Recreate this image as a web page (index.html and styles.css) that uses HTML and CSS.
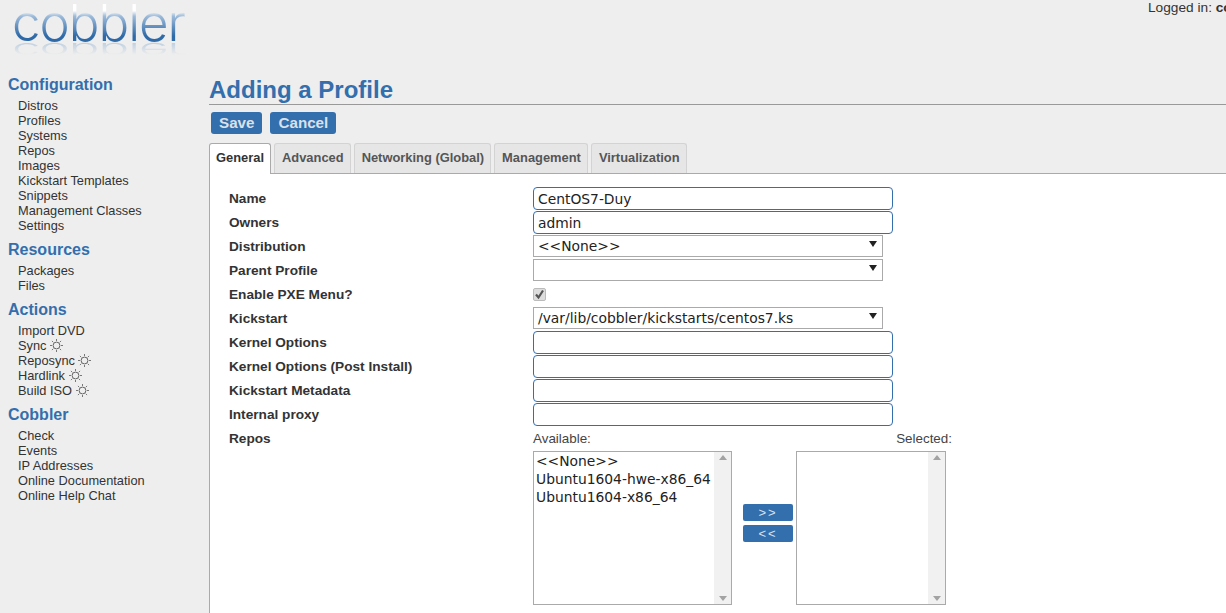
FILE: index.html
```html
<!DOCTYPE html>
<html lang="en">
<head>
  <meta charset="UTF-8" />
  <title>Cobbler Web Interface</title>
  <link rel="stylesheet" href="styles.css">
</head>
<body>
  <svg class="defs" width="0" height="0">
    <symbol id="spin" viewBox="0 0 13 13">
      <circle cx="6.5" cy="6.5" r="3.4" fill="none" stroke="#666" stroke-width="1"/>
      <path d="M6.5 0v2M6.5 11v2M0 6.5h2M11 6.5h2M1.9 1.9l1.4 1.4M9.7 9.7l1.4 1.4M1.9 11.1l1.4-1.4M9.7 3.3l1.4-1.4" stroke="#777" stroke-width="1" fill="none"/>
    </symbol>
  </svg>

  <div class="page">
    <aside class="sidebar">
      <div class="logo"><span class="logo-text">cobbler</span></div>

      <h2>Configuration</h2>
      <ul>
        <li>Distros</li>
        <li>Profiles</li>
        <li>Systems</li>
        <li>Repos</li>
        <li>Images</li>
        <li>Kickstart Templates</li>
        <li>Snippets</li>
        <li>Management Classes</li>
        <li>Settings</li>
      </ul>

      <h2>Resources</h2>
      <ul>
        <li>Packages</li>
        <li>Files</li>
      </ul>

      <h2>Actions</h2>
      <ul>
        <li>Import DVD</li>
        <li>Sync <svg class="spin"><use href="#spin"/></svg></li>
        <li>Reposync <svg class="spin"><use href="#spin"/></svg></li>
        <li>Hardlink <svg class="spin"><use href="#spin"/></svg></li>
        <li>Build ISO <svg class="spin"><use href="#spin"/></svg></li>
      </ul>

      <h2>Cobbler</h2>
      <ul>
        <li>Check</li>
        <li>Events</li>
        <li>IP Addresses</li>
        <li>Online Documentation</li>
        <li>Online Help Chat</li>
      </ul>
    </aside>

    <main class="content">
      <div class="login">Logged in: <b>cobbler</b></div>

      <h1>Adding a Profile</h1>

      <div class="actions">
        <button class="btn" type="button">Save</button>
        <button class="btn" type="button">Cancel</button>
      </div>

      <div class="tabs">
        <div class="tab active">General</div>
        <div class="tab">Advanced</div>
        <div class="tab">Networking (Global)</div>
        <div class="tab">Management</div>
        <div class="tab">Virtualization</div>
      </div>

      <form class="panel">
        <div class="row">
          <label>Name</label>
          <input class="field" type="text" value="CentOS7-Duy" />
        </div>
        <div class="row">
          <label>Owners</label>
          <input class="field" type="text" value="admin" />
        </div>
        <div class="row">
          <label>Distribution</label>
          <div class="select">&lt;&lt;None&gt;&gt;</div>
        </div>
        <div class="row">
          <label>Parent Profile</label>
          <div class="select"></div>
        </div>
        <div class="row">
          <label>Enable PXE Menu?</label>
          <span class="check">
            <svg width="11" height="11" viewBox="0 0 11 11"><path d="M2 5.5l2.5 3 4.5-7" fill="none" stroke="#555" stroke-width="2.2"/></svg>
          </span>
        </div>
        <div class="row">
          <label>Kickstart</label>
          <div class="select">/var/lib/cobbler/kickstarts/centos7.ks</div>
        </div>
        <div class="row">
          <label>Kernel Options</label>
          <input class="field" type="text" />
        </div>
        <div class="row">
          <label>Kernel Options (Post Install)</label>
          <input class="field" type="text" />
        </div>
        <div class="row">
          <label>Kickstart Metadata</label>
          <input class="field" type="text" />
        </div>
        <div class="row">
          <label>Internal proxy</label>
          <input class="field" type="text" />
        </div>
        <div class="row repos">
          <label>Repos</label>
          <div class="picker">
            <div class="picker-head">
              <span>Available:</span>
              <span>Selected:</span>
            </div>
            <div class="picker-body">
              <div class="listbox wide">
                <div class="options">
                  <div>&lt;&lt;None&gt;&gt;</div>
                  <div>Ubuntu1604-hwe-x86_64</div>
                  <div>Ubuntu1604-x86_64</div>
                </div>
                <div class="scroll"><i class="up"></i><i class="down"></i></div>
              </div>
              <div class="movers">
                <button class="btn small" type="button">&gt;&gt;</button>
                <button class="btn small" type="button">&lt;&lt;</button>
              </div>
              <div class="listbox">
                <div class="options"></div>
                <div class="scroll"><i class="up"></i><i class="down"></i></div>
              </div>
            </div>
          </div>
        </div>
      </form>
    </main>
  </div>
</body>
</html>
```

FILE: styles.css
```css
html,body{height:100%;}
body{
  margin:0;height:613px;overflow:hidden;
  background:#eee;color:#333;
  font-family:"Liberation Sans",Arial,sans-serif;font-size:12.8px;
}
.defs{position:absolute;}
.page{display:grid;grid-template-columns:209px 1fr;height:613px;}

/* ---------------- Sidebar ---------------- */
.sidebar{padding-left:8px;}
.logo{
  position:relative;height:76px;margin-left:4px;
  font-family:Inter,"Liberation Sans",sans-serif;font-weight:300;
  font-size:51px;letter-spacing:-1px;line-height:45px;
}
.logo-text,.logo::after{
  position:absolute;left:0;top:0;display:block;
  -webkit-background-clip:text;background-clip:text;color:transparent;
}
.logo-text{background-image:linear-gradient(#fff 24%,#9dbbd9 36%,#2f6aa8 80%);}
.logo::after{
  content:"cobbler";
  background-image:linear-gradient(transparent 25%,#c3d2e2 85%);
  transform:translateY(2px) scaleY(-.4);transform-origin:0 41px;
}
.sidebar h2{margin:0;color:#336ead;font-size:16px;line-height:18px;font-weight:bold;}
.sidebar ul{list-style:none;margin:4px 0 8px;padding:0 0 0 10px;}
.sidebar li{line-height:15px;height:15px;white-space:nowrap;}
.spin{width:13px;height:13px;vertical-align:-2px;}

/* ---------------- Content ---------------- */
.content{position:relative;min-width:0;overflow:hidden;}
.login{
  position:absolute;left:939px;top:0;
  white-space:nowrap;font-size:13.7px;line-height:16px;
}
.content h1{
  margin:75px 0 0;height:29px;
  border-bottom:1px solid #999;
  color:#336ead;font-size:24px;line-height:29px;font-weight:bold;
}
.actions{display:flex;gap:8px;padding:7px 0 0 2px;height:22px;}
.btn{
  border:0;border-radius:3px;padding:0 8px 2px;margin:0;
  background:#336ead;color:#d9e1ea;
  font:bold 15.2px "Liberation Sans",Arial,sans-serif;
}
.tabs{display:flex;gap:3px;margin-top:9px;height:30px;border-bottom:1px solid #aaa;}
.tab{
  box-sizing:border-box;height:30px;padding:0 6px 0 7px;line-height:28px;
  background:#e6e6e6;border:1px solid #d3d3d3;border-bottom:0;border-radius:3px 3px 0 0;
  color:#555;font-size:12.9px;font-weight:bold;
}
.tab.active{
  height:31px;padding:0 6px;background:#fff;color:#333;
  border-color:#aaa;position:relative;
}
.panel{
  box-sizing:border-box;height:439px;padding:13px 0 0 19px;
  background:#fff;border-left:1px solid #aaa;
}
.row{display:flex;align-items:flex-start;height:24px;}
.row label{width:304px;flex:none;font-size:13.65px;line-height:23px;font-weight:bold;color:#333;}
.field{
  box-sizing:border-box;width:360px;height:23px;margin:0;padding:0 4px;
  border:1px solid #336ead;border-radius:4px;outline:0;background:#fff;
  color:#222;font:13.85px "DejaVu Sans",Verdana,sans-serif;
}
.select{
  position:relative;box-sizing:border-box;width:350px;height:22px;padding:0 4px;
  border:1px solid #aaa;background:#fff;color:#222;
  font:13.85px/20px "DejaVu Sans",Verdana,sans-serif;
}
.select::after{
  content:"";position:absolute;right:5px;top:5px;
  border:4px solid transparent;border-top:6px solid #222;border-bottom:0;
}
.check{
  box-sizing:border-box;display:flex;align-items:center;justify-content:center;
  width:13px;height:13px;margin:5px 0 0;
  background:#ddd;border:1px solid #bbb;border-radius:2px;
}

/* ---------------- Repos picker ---------------- */
.row.repos{height:auto;}
.picker{width:419px;}
.picker-head{
  display:flex;justify-content:space-between;
  height:24px;line-height:24px;font-size:13.4px;color:#444;
}
.picker-body{display:flex;}
.listbox{
  box-sizing:border-box;display:flex;justify-content:space-between;
  width:150px;height:154px;border:1px solid #aaa;background:#fff;
}
.listbox.wide{width:199px;}
.options{padding:0 2px;font:13.85px/18px "DejaVu Sans",Verdana,sans-serif;color:#222;white-space:nowrap;}
.scroll{position:relative;flex:none;width:17px;background:#f1f1f1;}
.scroll i{position:absolute;left:5px;border:4px solid transparent;}
.scroll .up{top:3px;border-top:0;border-bottom:5px solid #a3a3a3;}
.scroll .down{bottom:3px;border-bottom:0;border-top:5px solid #a3a3a3;}
.movers{display:flex;flex-direction:column;gap:4px;padding:53px 3px 0 11px;width:50px;flex:none;}
.btn.small{width:50px;height:17px;padding:0;font-size:13px;line-height:15px;border-radius:2px;font-weight:normal;letter-spacing:2px;}
```
